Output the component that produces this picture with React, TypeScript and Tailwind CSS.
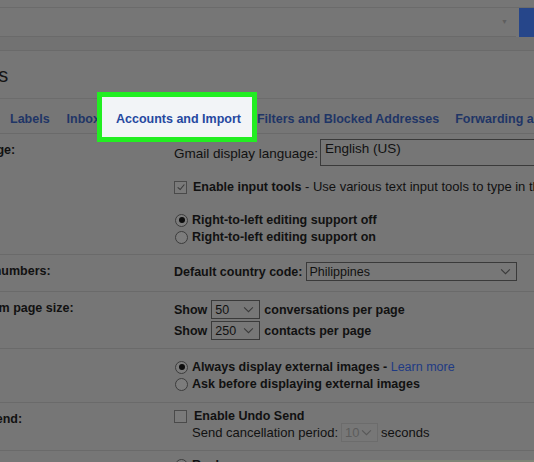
import React from 'react';

function Chevron({ className = '' }: { className?: string }) {
  return (
    <svg viewBox="0 0 12 8" className={'w-[11px] h-[7px] ' + className} fill="none" stroke="#3a3a3a" strokeWidth="1.2">
      <path d="M1 1.5 6 6.5 11 1.5" />
    </svg>
  );
}

function Radio({ on }: { on?: boolean }) {
  return (
    <span className="w-[13px] h-[13px] rounded-full border border-[#3c3c3c] bg-[#7c7c7c] flex items-center justify-center shrink-0">
      {on && <span className="w-[6px] h-[6px] rounded-full bg-[#0c0c0c]" />}
    </span>
  );
}

function Check({ on }: { on?: boolean }) {
  return (
    <span className="w-[13px] h-[13px] border border-[#4a4a4a] bg-[#7a7a7a] flex items-center justify-center shrink-0">
      {on && (
        <svg viewBox="0 0 12 12" className="w-[10px] h-[10px]" fill="none" stroke="#3a3a3a" strokeWidth="1.3">
          <path d="M2 6.5 5 9 10 3" />
        </svg>
      )}
    </span>
  );
}

function Select({ value, w, muted }: { value: string; w: string; muted?: boolean }) {
  return (
    <span className={`${w} h-[19px] border ${muted ? 'border-[#6c6c6c] text-[#5c5c5c]' : 'border-[#3a3a3a]'} bg-[#777] flex items-center justify-between pl-[3px] pr-[5px] font-normal`}>
      <span>{value}</span>
      <Chevron className={muted ? 'opacity-50' : ''} />
    </span>
  );
}

function Row({ label, h, children }: { label?: string; h: string; children: React.ReactNode }) {
  return (
    <div className={`flex ${h} border-t border-[#6a6a6a]`}>
      <div className="w-[174px] shrink-0 overflow-hidden pt-[8px]">
        {label && <div className="ml-[-48px] font-bold whitespace-nowrap">{label}</div>}
      </div>
      <div className="flex-1 min-w-0 whitespace-nowrap">{children}</div>
    </div>
  );
}

export default function App() {
  return (
    <div className="relative w-[534px] h-[462px] overflow-hidden bg-[#767676] text-[#111] text-[12.5px] leading-[16px]" style={{ fontFamily: '"Liberation Sans", Arial, sans-serif' }}>
      {/* top bar with search */}
      <div className="h-[8px] border-b border-[#6b6b6b]" />
      <div className="flex h-[29px]">
        <div className="flex-1 border-b border-[#6a6a6a] flex items-center justify-end pr-[8px] mr-[3px]">
          <span className="text-[#5e5e5e] text-[7px]">▼</span>
        </div>
        <div className="w-[15px] bg-[#26468a]" />
      </div>
      <div className="h-[14px] border-b border-[#6a6a6a] bg-[#727272]" />

      <div className="h-[47px] pt-[12px] overflow-hidden">
        <div className="ml-[-64px] text-[20px] leading-[24px] text-[#151515]">Settings</div>
      </div>

      {/* tabs */}
      <div className="h-[35px] border-t border-[#6c6c6c] flex items-center pl-[10px] whitespace-nowrap font-bold text-[12.5px] text-[#1f3566] pt-[5px]">
        <span className="mr-[17px]">Labels</span>
        <span className="mr-[16px]">Inbox</span>
        <span className="mr-[16px] relative z-10 text-[#2648a0]">Accounts and Import</span>
        <span className="mr-[16px]">Filters and Blocked Addresses</span>
        <span>Forwarding and POP/IMAP</span>
      </div>

      <Row label="Language:" h="h-[121px]">
        <div className="flex items-start mt-[5px]">
          <span className="mt-[7px] mr-[2px] text-[13.5px]">Gmail display language:</span>
          <span className="flex-1 h-[27px] border border-[#3a3a3a] pl-[4px] pt-[1px] -mr-[4px] text-[13.5px]">English (US)</span>
        </div>
        <div className="flex items-center gap-[6px] mt-[13px] text-[13px]">
          <Check on />
          <span><b className="text-[12.5px]">Enable input tools</b> - Use various text input tools to type in the language of your choice</span>
        </div>
        <div className="flex items-center gap-[4px] mt-[17px] pl-[1px] font-bold">
          <Radio on />
          <span>Right-to-left editing support off</span>
        </div>
        <div className="flex items-center gap-[4px] mt-[1px] pl-[1px] font-bold">
          <Radio />
          <span>Right-to-left editing support on</span>
        </div>
      </Row>

      <Row label="Phone numbers:" h="h-[37px]">
        <div className="flex items-center mt-[7px] font-bold gap-[3px]">
          <span>Default country code:</span>
          <Select value="Philippines" w="w-[211px]" />
        </div>
      </Row>

      <Row label="Maximum page size:" h="h-[57px]">
        <div className="flex items-center mt-[8px] font-bold gap-[4px]">
          <span>Show</span>
          <Select value="50" w="w-[49px]" />
          <span>conversations per page</span>
        </div>
        <div className="flex items-center mt-[2px] font-bold gap-[4px]">
          <span>Show</span>
          <Select value="250" w="w-[49px]" />
          <span>contacts per page</span>
        </div>
      </Row>

      <Row h="h-[54px]">
        <div className="flex items-center gap-[4px] mt-[10px] pl-[1px] font-bold">
          <Radio on />
          <span>Always display external images - <span className="font-normal text-[#1e3a84]">Learn more</span></span>
        </div>
        <div className="flex items-center gap-[4px] mt-[1px] pl-[1px] font-bold">
          <Radio />
          <span>Ask before displaying external images</span>
        </div>
      </Row>

      <Row label="Undo Send:" h="h-[48px]">
        <div className="flex items-center gap-[7px] mt-[5px] font-bold">
          <Check />
          <span>Enable Undo Send</span>
        </div>
        <div className="flex items-center gap-[3px] pl-[18px] -mt-[1px] text-[13px]">
          <span>Send cancellation period:</span>
          <Select value="10" w="w-[37px]" muted />
          <span>seconds</span>
        </div>
      </Row>

      <Row label="Default reply behavior:" h="h-[20px]">
        <div className="flex items-center gap-[4px] mt-[6px] pl-[1px] font-bold">
          <Radio on />
          <span>Reply</span>
          <span className="ml-[130px] w-[220px] h-[10px] bg-[#7d8477]" />
        </div>
      </Row>

      {/* highlight annotation */}
      <div className="absolute left-[97px] top-[92px] w-[160px] h-[50px] border-[5px] border-[#22ee22] bg-[#f2f4f7]" />
    </div>
  );
}
